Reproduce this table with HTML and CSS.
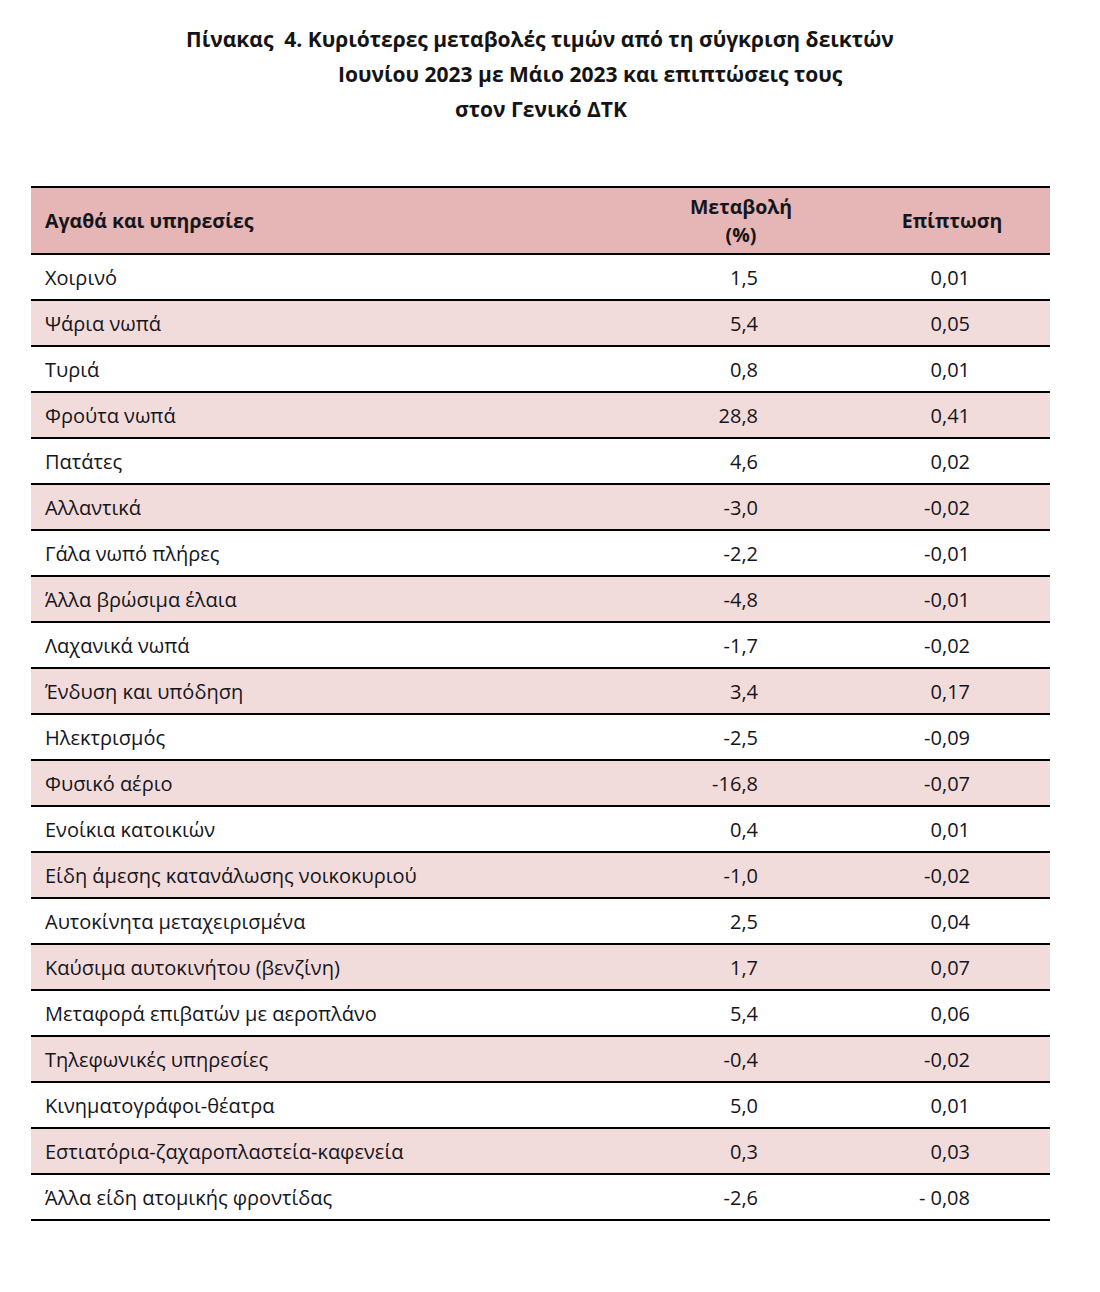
FILE: index.html
```html
<!DOCTYPE html>
<html lang="el">
<head>
<meta charset="utf-8">
<title>Πίνακας 4</title>
<link rel="stylesheet" href="styles.css">
</head>
<body>
<div class="page">
  <div class="title">
    <div class="title-line l1">Πίνακας&nbsp; 4. Κυριότερες μεταβολές τιμών από τη σύγκριση δεικτών</div>
    <div class="title-line l2">Ιουνίου 2023 με Μάιο 2023 και επιπτώσεις τους</div>
    <div class="title-line l3">στον Γενικό ΔΤΚ</div>
  </div>

  <div class="table">
    <div class="row head">
      <div class="c-name">Αγαθά και υπηρεσίες</div>
      <div class="c-chg">Μεταβολή<br>(%)</div>
      <div class="c-imp">Επίπτωση</div>
    </div>
    <div class="row"><div class="c-name">Χοιρινό</div><div class="c-chg">1,5</div><div class="c-imp">0,01</div></div>
    <div class="row alt"><div class="c-name">Ψάρια νωπά</div><div class="c-chg">5,4</div><div class="c-imp">0,05</div></div>
    <div class="row"><div class="c-name">Τυριά</div><div class="c-chg">0,8</div><div class="c-imp">0,01</div></div>
    <div class="row alt"><div class="c-name">Φρούτα νωπά</div><div class="c-chg">28,8</div><div class="c-imp">0,41</div></div>
    <div class="row"><div class="c-name">Πατάτες</div><div class="c-chg">4,6</div><div class="c-imp">0,02</div></div>
    <div class="row alt"><div class="c-name">Αλλαντικά</div><div class="c-chg">-3,0</div><div class="c-imp">-0,02</div></div>
    <div class="row"><div class="c-name">Γάλα νωπό πλήρες</div><div class="c-chg">-2,2</div><div class="c-imp">-0,01</div></div>
    <div class="row alt"><div class="c-name">Άλλα βρώσιμα έλαια</div><div class="c-chg">-4,8</div><div class="c-imp">-0,01</div></div>
    <div class="row"><div class="c-name">Λαχανικά νωπά</div><div class="c-chg">-1,7</div><div class="c-imp">-0,02</div></div>
    <div class="row alt"><div class="c-name">Ένδυση και υπόδηση</div><div class="c-chg">3,4</div><div class="c-imp">0,17</div></div>
    <div class="row"><div class="c-name">Ηλεκτρισμός</div><div class="c-chg">-2,5</div><div class="c-imp">-0,09</div></div>
    <div class="row alt"><div class="c-name">Φυσικό αέριο</div><div class="c-chg">-16,8</div><div class="c-imp">-0,07</div></div>
    <div class="row"><div class="c-name">Ενοίκια κατοικιών</div><div class="c-chg">0,4</div><div class="c-imp">0,01</div></div>
    <div class="row alt"><div class="c-name">Είδη άμεσης κατανάλωσης νοικοκυριού</div><div class="c-chg">-1,0</div><div class="c-imp">-0,02</div></div>
    <div class="row"><div class="c-name">Αυτοκίνητα μεταχειρισμένα</div><div class="c-chg">2,5</div><div class="c-imp">0,04</div></div>
    <div class="row alt"><div class="c-name">Καύσιμα αυτοκινήτου (βενζίνη)</div><div class="c-chg">1,7</div><div class="c-imp">0,07</div></div>
    <div class="row"><div class="c-name">Μεταφορά επιβατών με αεροπλάνο</div><div class="c-chg">5,4</div><div class="c-imp">0,06</div></div>
    <div class="row alt"><div class="c-name">Τηλεφωνικές υπηρεσίες</div><div class="c-chg">-0,4</div><div class="c-imp">-0,02</div></div>
    <div class="row"><div class="c-name">Κινηματογράφοι-θέατρα</div><div class="c-chg">5,0</div><div class="c-imp">0,01</div></div>
    <div class="row alt"><div class="c-name">Εστιατόρια-ζαχαροπλαστεία-καφενεία</div><div class="c-chg">0,3</div><div class="c-imp">0,03</div></div>
    <div class="row"><div class="c-name">Άλλα είδη ατομικής φροντίδας</div><div class="c-chg">-2,6</div><div class="c-imp">- 0,08</div></div>
  </div>
</div>
</body>
</html>
```
FILE: styles.css
```css
html, body {
  margin: 0;
  padding: 0;
  background: #ffffff;
}

.page {
  font-family: "Open Sans", "Noto Sans", sans-serif;
  color: #15151c;
  padding: 22px 0 0 31px;
}

.title {
  font-size: 21px;
  font-weight: 700;
  line-height: 35px;
  color: #141414;
}

.title-line.l1 { padding-left: 155px; }
.title-line.l2 { padding-left: 307px; }
.title-line.l3 { padding-left: 424px; }

.table {
  width: 1019px;
  margin-top: 59px;
  border-top: 2px solid #000;
}

.row {
  display: grid;
  grid-template-columns: 610px 200px 209px;
  align-items: center;
  height: 44px;
  border-bottom: 2px solid #000;
  font-size: 20px;
  font-weight: 500;
}

.row.alt {
  background: #f2dcdb;
}

.row.head {
  height: 65px;
  background: #e5b6b5;
  font-weight: 700;
  font-size: 19.5px;
  line-height: 28px;
}

.c-name {
  padding-left: 14px;
}

.c-chg {
  text-align: right;
  padding-right: 83px;
}

.c-imp {
  text-align: right;
  padding-right: 80px;
}

.head .c-chg {
  text-align: center;
  padding-right: 0;
}

.head .c-imp {
  text-align: center;
  padding-right: 0;
  padding-left: 13px;
}
```
